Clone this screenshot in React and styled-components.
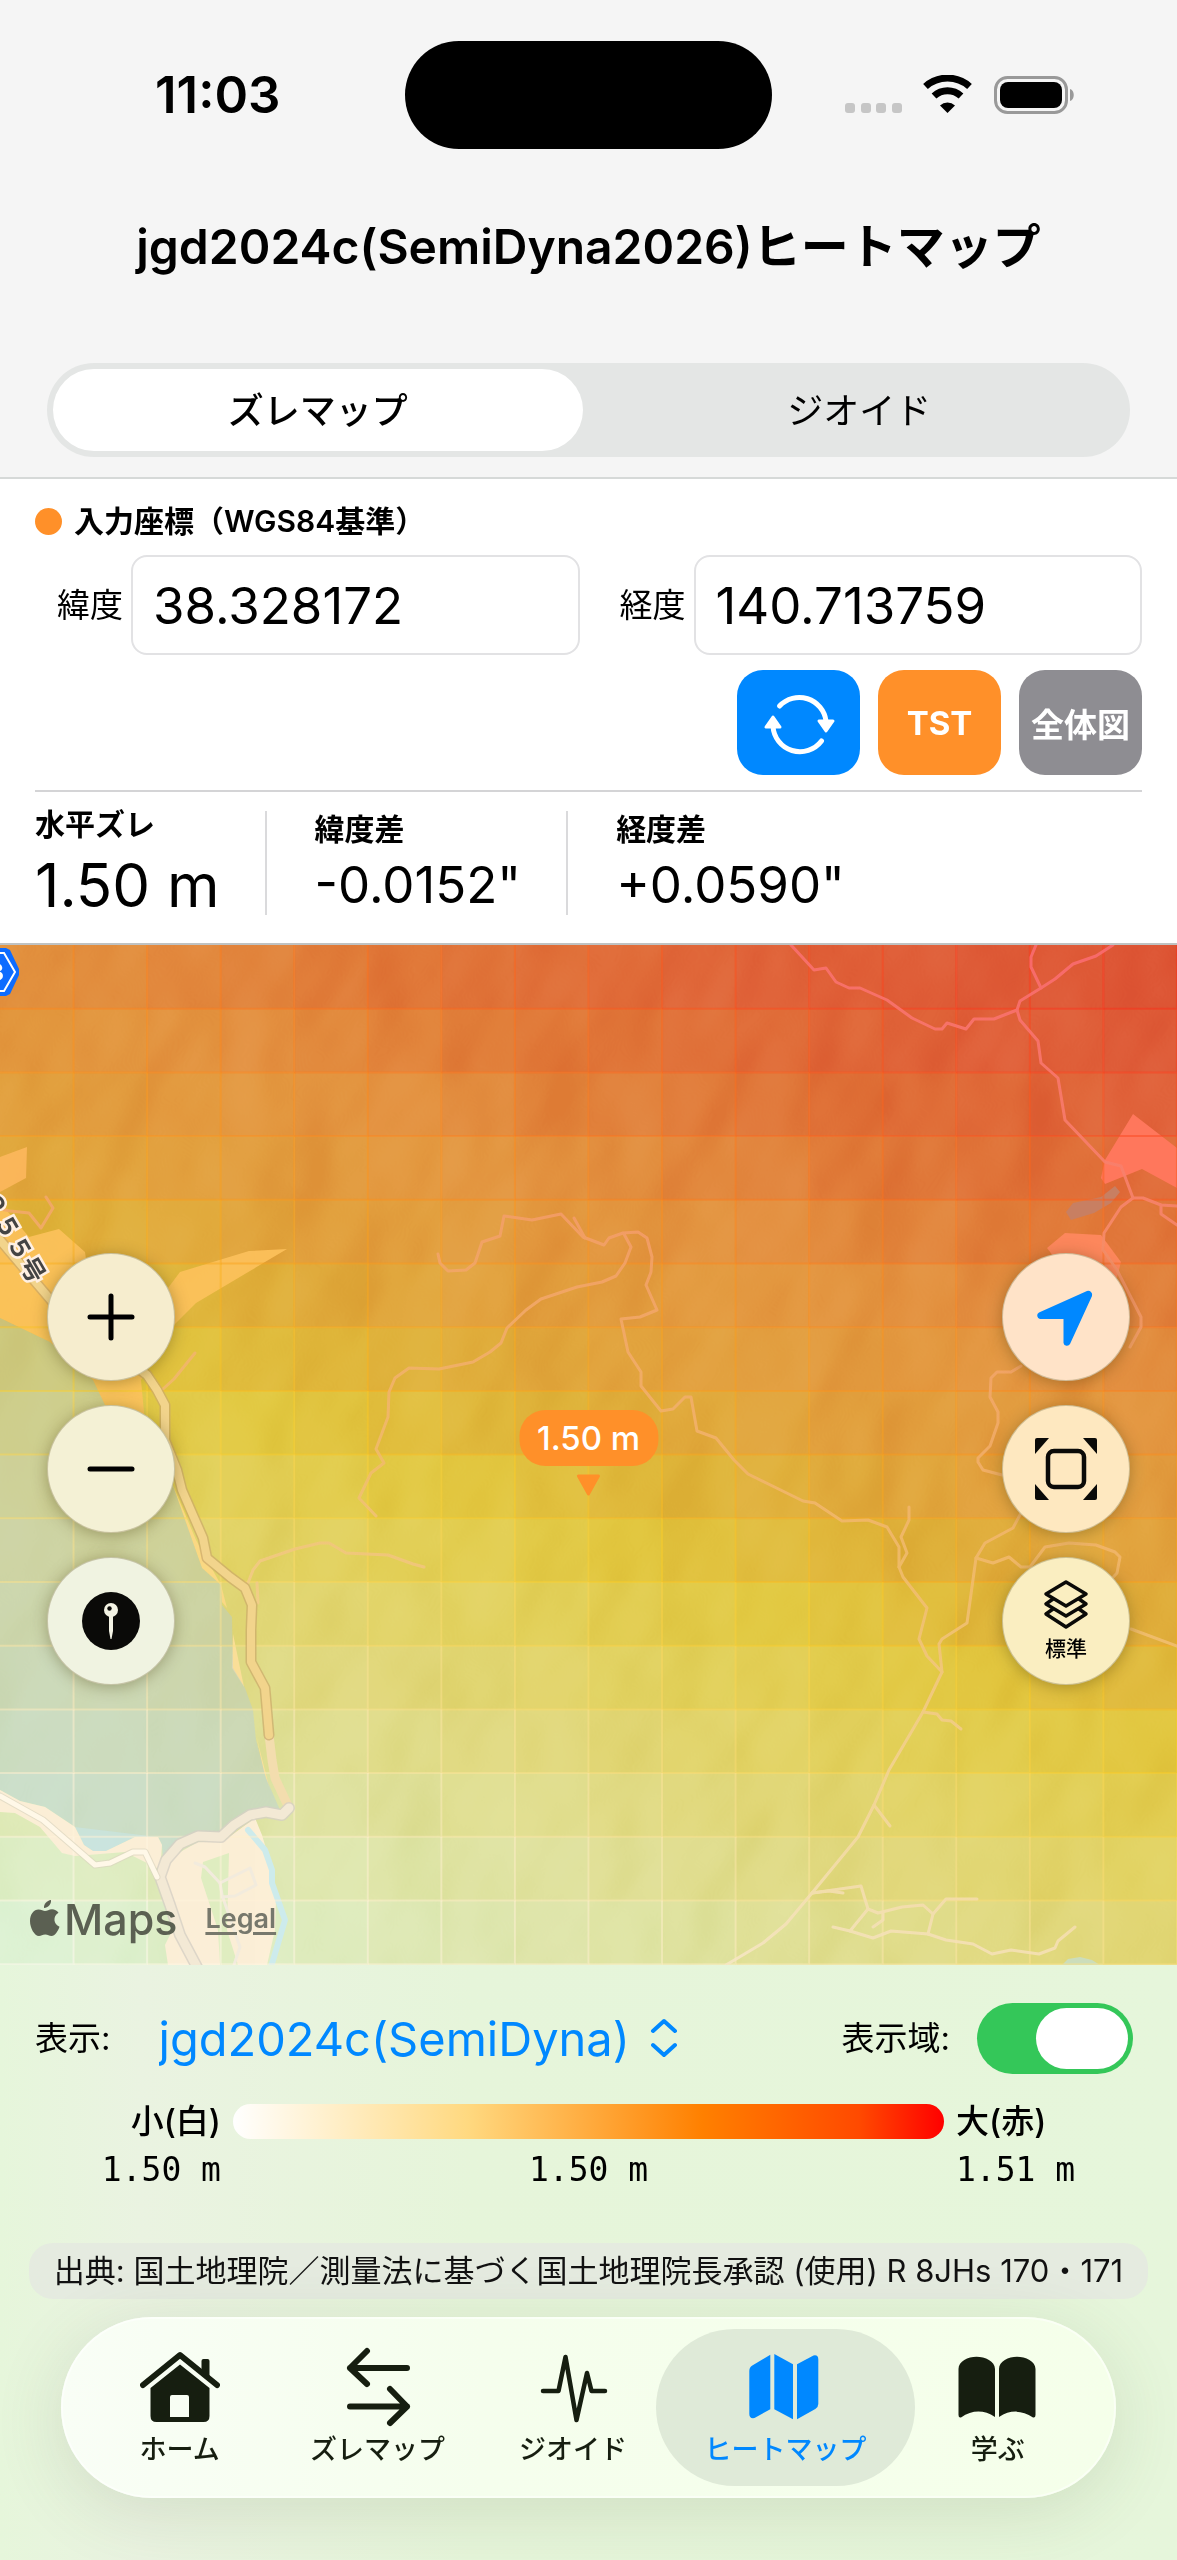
import { useState } from 'react'
import styled, { createGlobalStyle } from 'styled-components'

const GlobalStyle = createGlobalStyle`
    * {
        box-sizing: border-box;
    }

    body {
        margin: 0;
        background: #E6F5DA;
        color: #000;
        font-family: Inter, 'Noto Sans CJK JP', sans-serif;
    }

    button, input, select {
        font-family: inherit;
        color: inherit;
    }
`

const Page = styled.div`
    display: flex;
    flex-direction: column;
    min-height: 100vh;
`

/* ---------- header ---------- */

const Header = styled.header`
    background: #F5F5F5;
    border-bottom: 2px solid #D6D9D8;
    padding: 41px 47px 20px;
`

const StatusBar = styled.div`
    display: grid;
    grid-template-columns: 1fr 367px 1fr;
    align-items: center;
`

const Clock = styled.div`
    padding-left: 108px;
    font-size: 51px;
    line-height: 60px;
    font-weight: 600;
`

const Island = styled.div`
    height: 108px;
    border-radius: 54px;
    background: #000;
`

const StatusIcons = styled.div`
    display: flex;
    justify-content: flex-end;
    padding-right: 54px;
`

const Title = styled.h1`
    margin: 60px 0 78px;
    font-size: 48px;
    line-height: 76px;
    font-weight: 600;
    text-align: center;
    white-space: nowrap;
`

const Segments = styled.div`
    display: grid;
    grid-template-columns: 1fr 1fr;
    gap: 12px;
    height: 94px;
    padding: 6px;
    border-radius: 47px;
    background: #E4E6E5;
`

const Segment = styled.button`
    padding: 0 0 4px;
    border: none;
    border-radius: 41px;
    background: ${({ $active }) => ($active ? '#FFF' : 'transparent')};
    font-size: 36px;
    font-weight: ${({ $active }) => ($active ? 500 : 400)};
    cursor: pointer;
`

/* ---------- coordinate panel ---------- */

const Panel = styled.section`
    background: #FFF;
    border-bottom: 2px solid #BFC2C2;
    padding: 24px 35px 19px;
`

const PanelHeading = styled.h2`
    display: flex;
    align-items: center;
    gap: 12px;
    margin: 0 0 16px;
    font-size: 30px;
    line-height: 36px;
    font-weight: 600;
`

const Dot = styled.span`
    width: 27px;
    height: 27px;
    border-radius: 50%;
    background: #FF9029;
`

const Fields = styled.div`
    display: grid;
    grid-template-columns: repeat(2, minmax(0, 1fr));
    gap: 40px;
    padding-left: 22px;
`

const Field = styled.div`
    display: flex;
    align-items: center;
    gap: 8px;
`

const FieldLabel = styled.label`
    flex: none;
    font-size: 33px;
    line-height: 40px;
`

const FieldInput = styled.input`
    flex: 1;
    min-width: 0;
    height: 100px;
    padding: 0 20px;
    border: 2px solid #E2E2E4;
    border-radius: 16px;
    background: #FFF;
    font-size: 51px;
`

const Actions = styled.div`
    display: flex;
    justify-content: flex-end;
    gap: 18px;
    padding: 15px 0;
    border-bottom: 2px solid #D4D4D6;
`

const Action = styled.button`
    display: flex;
    align-items: center;
    justify-content: center;
    width: 123px;
    height: 105px;
    padding: 0;
    border: none;
    border-radius: 26px;
    background: ${({ $color }) => $color};
    color: #FFF;
    font-size: 33px;
    font-weight: 700;
    white-space: nowrap;
    cursor: pointer;
`

const Stats = styled.dl`
    display: flex;
    align-items: center;
    margin: 10px 0 0;
`

const Stat = styled.div`
    position: relative;
    padding-right: 47px;
    margin-right: 48px;

    &:not(:last-child)::after {
        content: '';
        position: absolute;
        right: 0;
        top: calc(50% - 52px);
        width: 2px;
        height: 104px;
        background: #DADADC;
    }
`

const StatLabel = styled.dt`
    font-size: 30px;
    line-height: 44px;
    font-weight: 600;
`

const StatValue = styled.dd`
    margin: 0;
    font-size: ${({ $large }) => ($large ? '60px' : '51px')};
    line-height: ${({ $large }) => ($large ? '78px' : '68px')};
    white-space: nowrap;
`

/* ---------- map ---------- */

const MapArea = styled.main`
    position: relative;
    height: 1020px;
    overflow: hidden;
    padding: 308px 47px 0;
    display: flex;
    justify-content: space-between;
    align-items: flex-start;
`

const MapCanvas = styled.svg`
    position: absolute;
    inset: 0;
    width: 100%;
    height: 100%;
    font-family: Inter, 'Noto Sans CJK JP', sans-serif;
`

const Controls = styled.div`
    position: relative;
    display: flex;
    flex-direction: column;
    gap: 24px;
`

const RoundButton = styled.button`
    display: flex;
    flex-direction: column;
    align-items: center;
    justify-content: center;
    gap: 4px;
    width: 128px;
    height: 128px;
    padding: 0;
    border: 1px solid rgba(120, 110, 60, 0.35);
    border-radius: 50%;
    background: ${({ $tint }) => $tint};
    box-shadow: 0 2px 16px rgba(60, 50, 0, 0.35);
    font-size: 21px;
    line-height: 28px;
    font-weight: 500;
    cursor: pointer;
`

const Marker = styled.div`
    position: absolute;
    left: 50%;
    top: 465px;
    transform: translateX(-50%);
    display: flex;
    flex-direction: column;
    align-items: center;
    gap: 8px;
`

const MarkerLabel = styled.div`
    height: 56px;
    padding: 0 18px;
    border-radius: 26px;
    background: #FF9029;
    color: #FFF;
    font-size: 33px;
    line-height: 56px;
    font-weight: 500;
    white-space: nowrap;
`

const Attribution = styled.div`
    position: absolute;
    left: 30px;
    bottom: 18px;
    display: flex;
    align-items: center;
    color: #5B6052;
`

const MapsName = styled.span`
    margin: 0 28px 0 4px;
    font-size: 43px;
    line-height: 56px;
    font-weight: 500;
`

const Legal = styled.a`
    color: #77786C;
    font-size: 27px;
    line-height: 56px;
    font-weight: 600;
    text-underline-offset: 4px;
    text-decoration-thickness: 3px;
`

/* ---------- legend ---------- */

const Footer = styled.section`
    flex: 1;
    background: linear-gradient(90deg, #E6F6DB 0%, #EAF3E1 12%, #E6F5DA 40%, #E6F6DB 100%);
    padding: 37px 29px 62px;
`

const DisplayRow = styled.div`
    display: flex;
    align-items: center;
    height: 72px;
    padding: 0 15px 0 6px;
`

const RowLabel = styled.label`
    font-size: 33px;
    line-height: 40px;
    white-space: nowrap;
`

const ModelSelect = styled.select`
    appearance: none;
    margin: 0 18px 0 48px;
    padding: 0;
    border: none;
    background: transparent;
    color: #0088FF;
    font-size: 47px;
    cursor: pointer;
`

const Spacer = styled.div`
    flex: 1;
`

const Toggle = styled.input`
    appearance: none;
    width: 156px;
    height: 71px;
    margin: 0 0 0 27px;
    padding: 5px;
    border-radius: 36px;
    background: ${({ checked }) => (checked ? '#34C759' : '#C7CCC4')};
    cursor: pointer;

    &::before {
        content: '';
        display: block;
        width: 92px;
        height: 61px;
        margin-left: ${({ checked }) => (checked ? 'auto' : '0')};
        border-radius: 31px;
        background: #FFF;
    }
`

const Legend = styled.div`
    display: grid;
    grid-template-columns: 186px 1fr 186px;
    column-gap: 12px;
    align-items: center;
    margin-top: 23px;
    padding: 0 6px;
`

const LegendEnd = styled.span`
    font-size: 33px;
    line-height: 48px;
    font-weight: 500;
    text-align: ${({ $align }) => $align};
`

const LegendBar = styled.div`
    height: 35px;
    border-radius: 18px;
    background: linear-gradient(90deg, #FFF 0%, #FFD980 33%, #FF8000 66%, #FF4A00 88%, #FF0000 100%);
`

const LegendValue = styled.span`
    font-family: 'DejaVu Sans Mono', monospace;
    font-size: 33px;
    line-height: 50px;
    text-align: ${({ $align }) => $align};
`

const Source = styled.p`
    margin: 48px 0 18px;
    border-radius: 24px;
    background: #E5EBE0;
    color: #111;
    font-size: 31px;
    line-height: 56px;
    text-align: center;
    white-space: nowrap;
`

/* ---------- tab bar ---------- */

const TabBar = styled.nav`
    display: grid;
    grid-template-columns: 171fr 224fr 166fr 258fr 166fr;
    height: 181px;
    margin: 0 32px;
    padding: 12px 35px 12px 33px;
    border-radius: 91px;
    background: linear-gradient(90deg, #F9FEF6, #F5FEED 40%, #F5FFEA);
    box-shadow: 0 14px 70px rgba(70, 90, 50, 0.14), inset 0 0 0 2px rgba(255, 255, 255, 0.5);
`

const Tab = styled.a`
    display: flex;
    flex-direction: column;
    align-items: center;
    padding-top: 18px;
    border-radius: 79px;
    background: ${({ $active }) => ($active ? '#DFEAD8' : 'transparent')};
    color: ${({ $active }) => ($active ? '#0088FF' : '#161E10')};
    font-size: 27px;
    line-height: 46px;
    font-weight: 500;
    text-decoration: none;
    white-space: nowrap;
`

/* ---------- map data ---------- */

const CELL_W = 73.56
const CELL_H = 63.7

// [distance down the slope, fill, edge]
const RAMP = [
    [-7, [220, 82, 51], [250, 40, 25]],
    [-4.5, [224, 97, 57], [252, 70, 30]],
    [-2.7, [224, 114, 56], [252, 100, 30]],
    [-1.6, [225, 127, 58], [252, 115, 30]],
    [0, [227, 147, 64], [252, 135, 30]],
    [2.4, [226, 162, 62], [250, 160, 30]],
    [4, [223, 179, 58], [250, 175, 30]],
    [5.6, [226, 200, 64], [250, 205, 40]],
    [7.4, [226, 210, 96], [252, 215, 90]],
    [9, [225, 216, 124], [252, 225, 140]],
    [11.4, [223, 227, 162], [255, 238, 200]],
    [15, [222, 242, 212], [255, 250, 240]],
]

function rampColor(s, index) {
    if (s <= RAMP[0][0]) return `rgb(${RAMP[0][index].join(',')})`
    for (let i = 1; i < RAMP.length; i++) {
        const [end] = RAMP[i]
        if (s <= end) {
            const [start] = RAMP[i - 1]
            const t = (s - start) / (end - start)
            const mix = RAMP[i][index].map((v, k) => Math.round(RAMP[i - 1][index][k] * (1 - t) + v * t))
            return `rgb(${mix.join(',')})`
        }
    }
    return `rgb(${RAMP[RAMP.length - 1][index].join(',')})`
}

const CELLS = Array.from({ length: 256 }, (_, i) => {
    const col = i % 16
    const row = Math.floor(i / 16)
    const s = row - col * 0.43
    return { id: i, x: col * CELL_W, y: row * CELL_H, fill: rampColor(s, 1), edge: rampColor(s, 2) }
})

const TRAILS = [
    '0,1209 10,1211 29,1213 41,1228 53,1208 46,1197',
    '438,1254 440,1263 448,1271 466,1270 475,1263 482,1242 500,1236 504,1216 532,1220 561,1214 583,1237 604,1245 609,1238 623,1233 638,1232 647,1238 652,1257 651,1272 646,1285 657,1310 640,1317 621,1319 628,1352 641,1372 641,1386 661,1411 673,1409 685,1397 691,1397 697,1431 716,1438 734,1460 748,1474 803,1501 815,1503 842,1521 868,1520 887,1527 899,1547 899,1567 903,1577 927,1608 919,1639 927,1656 942,1672 923,1712 889,1770 874,1805 858,1837 812,1893 786,1924 763,1943 726,1965',
    '574,1218 585,1238',
    '624,1234 631,1247 625,1263 616,1276 602,1282 577,1287 541,1299 526,1310 507,1328 501,1343 490,1352 473,1362 439,1369 409,1368 395,1378 389,1392 388,1417 376,1449 384,1463 371,1473 359,1498 376,1516',
    '248,1583 253,1570 260,1561 295,1549 320,1543 329,1543 346,1553 388,1555 413,1564 424,1567',
    '257,1583 258,1603',
    '163,1389 174,1379 195,1353',
    '791,945 814,970 826,968 836,982 849,988 860,988 887,1000 912,1018 935,1029 942,1029 947,1023 966,1029 974,1019 994,1019 1017,1010 1020,1001 1041,988 1055,979 1073,964 1096,956 1113,945',
    '1036,945 1031,957 1031,967 1041,988',
    '1017,1010 1020,1020 1038,1041 1041,1063 1058,1078 1065,1120 1105,1162 1121,1166 1133,1198 1121,1207 1104,1233 1103,1250 1117,1270 1141,1317 1141,1327 1130,1347',
    '1133,1198 1143,1198 1161,1205 1177,1206',
    '1161,1205 1161,1214 1177,1225',
    '1021,1366 1011,1372 997,1372 991,1378 990,1397 998,1412 998,1423 990,1446 978,1458 978,1462 983,1470 1002,1475',
    '1021,1513 1013,1528 985,1543 976,1558 967,1623 942,1639 939,1644 942,1672',
    '976,1558 993,1563 1009,1557 1021,1567 1030,1567 1045,1547 1069,1543 1096,1545 1115,1552 1120,1557 1117,1573 1106,1585',
    '909,1507 909,1520 901,1537 907,1553 899,1567',
    '923,1712 937,1714 942,1720 951,1721 961,1729',
    '874,1805 890,1826',
    '812,1893 861,1886 868,1909 878,1913 902,1907 923,1905 933,1914 946,1899 977,1899',
    '812,1893 829,1891 843,1893',
    '868,1909 850,1931',
    '883,1913 883,1920 873,1927',
    '933,1914 928,1934',
    '833,1927 850,1931 873,1938 891,1931 928,1934 946,1940 973,1944 992,1954 1011,1950 1039,1954 1055,1948 1058,1941 1075,1927',
    '1131,1629 1177,1646',
]

const MAIN_ROAD = '0,1240 38,1285 55,1305 147,1375 157,1390 165,1405 165,1440 177,1470 182,1490 203,1538 207,1558 230,1577 245,1588 252,1605 251,1630 251,1662 265,1688 269,1735'
const LINK_ROAD = '269,1735 272,1760 275,1778 289,1808'
const SOUTH_ROAD = '289,1808 282,1815 266,1812 250,1815 234,1825 221,1837 198,1836 180,1844 166,1860 160,1877 170,1905 180,1935 197,1967'
const WEST_ROAD = '0,1796 43,1820 95,1865 110,1863 133,1852 145,1852 157,1877'
const LAKE = '0,1318 50,1342 93,1380 105,1405 130,1420 172,1483 202,1568 221,1585 222,1605 232,1617 233,1668 245,1688 253,1710 256,1740 266,1778 280,1810 250,1820 232,1833 220,1839 197,1836 180,1842 165,1856 163,1860 162,1845 158,1837 135,1837 106,1851 93,1851 84,1845 75,1827 45,1807 20,1801 0,1790'

function HeatMap() {
    return (
        <MapCanvas viewBox="0 945 1177 1020" preserveAspectRatio="xMidYMid slice" aria-hidden="true">
            <defs>
                <filter id="relief" x="0" y="0" width="100%" height="100%" colorInterpolationFilters="sRGB">
                    <feTurbulence type="fractalNoise" baseFrequency="0.008 0.005" numOctaves="3" seed="8" />
                    <feGaussianBlur stdDeviation="3" />
                    <feDiffuseLighting surfaceScale="30" lightingColor="#FFF">
                        <feDistantLight azimuth="315" elevation="30" />
                    </feDiffuseLighting>
                </filter>
                <linearGradient id="trail" gradientUnits="userSpaceOnUse" x1="960" y1="945" x2="760" y2="1965">
                    <stop offset="0" stopColor="#FA6C70" />
                    <stop offset="0.2" stopColor="#F8826C" />
                    <stop offset="0.35" stopColor="#F3A168" />
                    <stop offset="0.6" stopColor="#F1BC6C" />
                    <stop offset="0.8" stopColor="#F3D494" />
                    <stop offset="1" stopColor="#F6E6C4" />
                </linearGradient>
            </defs>
            <g transform="translate(0 945)">
                {CELLS.map((cell) => (
                    <rect key={cell.id} x={cell.x} y={cell.y} width="74" height="64.2" fill={cell.fill} />
                ))}
            </g>
            <g transform="rotate(35 588 1455)" opacity="0.17" style={{ mixBlendMode: 'soft-light' }}>
                <rect x="-250" y="550" width="1700" height="1800" filter="url(#relief)" />
            </g>

            <g fill="#FFB95F" opacity="0.85">
                <polygon points="0,1157 27,1147 26,1178 0,1192" />
                <polygon points="0,1203 8,1212 29,1237 59,1229 85,1252 88,1273 168,1288 180,1272 249,1251 287,1249 196,1303 172,1327 141,1380 145,1423 130,1425 105,1405 93,1380 50,1342 0,1318" fill="#FFC35E" />
                <polygon points="172,1483 196,1540 221,1585 202,1568" fill="#FFD987" />
                <polygon points="221,1585 227,1608 222,1602" fill="#FFD987" />
                <polygon points="233,1634 244,1687 232,1668" fill="#FFE09C" />
                <polygon points="256,1735 270,1790 264,1772" fill="#FFE09C" />
            </g>
            <polygon points="1133,1114 1177,1148 1177,1188 1142,1169 1105,1184 1101,1178 1105,1160" fill="#FF775C" />
            <polygon points="1047,1248 1065,1233 1101,1235 1121,1262 1115,1285 1060,1265" fill="#FD875C" />
            <polygon points="1066,1212 1073,1203 1101,1197 1115,1186 1120,1192 1111,1203 1094,1213 1071,1220" fill="#C87F62" />
            <polygon points={LAKE} fill="#A8CBEC" opacity="0.34" />
            <polygon points="75,1827 84,1845 93,1851 106,1851 135,1837 158,1837" fill="#C8E8EC" opacity="0.5" />
            <polygon points="1062,1965 1068,1959 1080,1957 1092,1960 1100,1965" fill="#CCDDBB" />

            <g fill="#FDEFD8" opacity="0.95">
                <polygon points="0,1790 20,1801 45,1807 75,1827 84,1845 93,1851 106,1851 135,1837 158,1837 162,1845 160,1870 145,1862 125,1852 75,1856 62,1853 40,1827 15,1813 0,1812" />
                <polygon points="160,1877 166,1860 198,1842 225,1840 255,1818 262,1835 268,1855 272,1885 276,1900 275,1930 267,1965 168,1965 165,1945 175,1925" />
            </g>
            <polygon points="203,1862 229,1853 227,1930 238,1965 220,1965 218,1930 201,1878" fill="#DFEDC0" />

            <g fill="none" strokeLinejoin="round" strokeLinecap="round">
                <polyline points="248,1830 265,1850 272,1870 272,1883 285,1920 271,1967" stroke="#CDEBEC" strokeWidth="6" />
                <g stroke="#F2EBDD" strokeWidth="3">
                    <polyline points="195,1863 205,1867 220,1883 222,1895 240,1947 234,1965" />
                    <polyline points="220,1883 250,1868 256,1885 235,1896 222,1897" />
                </g>
            </g>

            <g>
                {CELLS.map((cell) => (
                    <path
                        key={cell.id}
                        d={`M${cell.x} ${cell.y + 945 + CELL_H}h${CELL_W}v${-CELL_H}`}
                        fill="none"
                        stroke={cell.edge}
                        strokeWidth="2"
                        opacity="0.5"
                    />
                ))}
            </g>

            <g fill="none" strokeLinejoin="round" strokeLinecap="round">
                <g stroke="url(#trail)" strokeWidth="3" opacity="0.9">
                    {TRAILS.map((points) => <polyline key={points} points={points} />)}
                </g>
                <polyline points={LINK_ROAD} stroke="#F3DDAE" strokeWidth="9" />
                <polyline points={MAIN_ROAD} stroke="#CBA86A" strokeWidth="11" opacity="0.7" />
                <polyline points={MAIN_ROAD} stroke="#F2D48C" strokeWidth="8" />
                <polyline points={SOUTH_ROAD} stroke="#D6D0C4" strokeWidth="12" opacity="0.8" />
                <polyline points={SOUTH_ROAD} stroke="#F3E9D5" strokeWidth="9" />
                <polyline points={WEST_ROAD} stroke="#DCD6C0" strokeWidth="7" opacity="0.7" />
                <polyline points={WEST_ROAD} stroke="#FFF8E8" strokeWidth="5" />
            </g>

            <path d="M-14 948h20l4 2 9 19v6l-9 19-4 2h-20z" fill="#0D6CFF" />
            <path d="M-12 953h16l11 19-11 19h-16" fill="none" stroke="#FFF" strokeWidth="2" />
            <text x="4" y="981" textAnchor="end" fontSize="25" fontWeight="800" fill="#FFF">3</text>
            <text
                x="31"
                y="1285"
                transform="rotate(60 31 1285)"
                textAnchor="end"
                fontSize="25"
                fontWeight="700"
                fill="#444"
                stroke="#FFF0E2"
                strokeWidth="5"
                paintOrder="stroke"
            >
                ２５５号
            </text>
        </MapCanvas>
    )
}

/* ---------- icons ---------- */

function PhoneStatus() {
    return (
        <svg width="232" height="40" viewBox="0 0 232 40" aria-hidden="true">
            <g fill="#C6C6C6">
                <rect x="1" y="28" width="10" height="10" rx="3" />
                <rect x="17" y="28" width="10" height="10" rx="3" />
                <rect x="32" y="28" width="10" height="10" rx="3" />
                <rect x="48" y="28" width="10" height="10" rx="3" />
            </g>
            <g fill="none" stroke="#000" strokeWidth="7">
                <path d="M81.500 11.500a33 33 0 0 1 44 0" />
                <path d="M90 21a20 20 0 0 1 27 0" />
            </g>
            <path d="M103.500 38l-7.500-7.500a11 11 0 0 1 15 0z" />
            <rect x="151.500" y="2.500" width="71" height="35" rx="12" fill="none" stroke="#999" strokeWidth="3" />
            <rect x="156" y="7" width="62" height="26" rx="8" />
            <path d="M226 14c5 1 5 11 0 12z" fill="#999" />
        </svg>
    )
}

function RefreshIcon() {
    return (
        <svg width="80" height="80" viewBox="0 0 80 80" fill="none" stroke="#FFF" strokeWidth="5" strokeLinecap="round" aria-hidden="true">
            <path d="M20.500 23A27 27 0 0 1 67 38" />
            <path d="M62.500 58A27 27 0 0 1 14 43" />
            <path d="M60 38h14l-7 10z" fill="#FFF" strokeWidth="3" strokeLinejoin="round" />
            <path d="M7 44h14l-7-10z" fill="#FFF" strokeWidth="3" strokeLinejoin="round" />
        </svg>
    )
}

function PlusIcon() {
    return (
        <svg width="52" height="52" viewBox="0 0 52 52" stroke="#000" strokeWidth="5" strokeLinecap="round" aria-hidden="true">
            <path d="M5 26h42M26 5v42" />
        </svg>
    )
}

function MinusIcon() {
    return (
        <svg width="52" height="52" viewBox="0 0 52 52" stroke="#000" strokeWidth="5" strokeLinecap="round" aria-hidden="true">
            <path d="M5 26h42" />
        </svg>
    )
}

function PinIcon() {
    return (
        <svg width="58" height="58" viewBox="0 0 58 58" aria-hidden="true">
            <circle cx="29" cy="29" r="29" fill="#0A0A08" />
            <circle cx="29" cy="18" r="7" fill="#F3F3E4" />
            <circle cx="27.500" cy="16.500" r="2.200" fill="#0A0A08" />
            <path d="M27 24h4v15l-1.500 8h-1L27 39z" fill="#F3F3E4" />
        </svg>
    )
}

function LocateIcon() {
    return (
        <svg width="64" height="64" viewBox="0 0 64 64" aria-hidden="true">
            <path d="M53 6L5 27.500a3.500 3.500 0 0 0 1 6.500h23.500v24a3.500 3.500 0 0 0 6.500 1L58 11a4 4 0 0 0-5-5z" fill="#0088FF" />
        </svg>
    )
}

function FrameIcon() {
    return (
        <svg width="64" height="64" viewBox="0 0 64 64" fill="#0A0A08" aria-hidden="true">
            <rect x="14" y="14" width="36" height="36" rx="6" fill="none" stroke="#0A0A08" strokeWidth="4.500" />
            <path d="M1 3q0-2 2-2h12L1 17z" />
            <path d="M63 3q0-2-2-2H49l14 16z" />
            <path d="M1 61q0 2 2 2h12L1 47z" />
            <path d="M63 61q0 2-2 2H49l14-16z" />
        </svg>
    )
}

function LayersIcon() {
    return (
        <svg width="48" height="52" viewBox="0 0 48 52" fill="none" stroke="#0A0A08" strokeWidth="3.500" strokeLinejoin="round" aria-hidden="true">
            <path d="M24 3L44 15 24 27 4 15z" />
            <path d="M11 20l-7 5 20 12 20-12-7-5" />
            <path d="M11 30l-7 5 20 13 20-13-7-5" />
        </svg>
    )
}

function AppleIcon() {
    return (
        <svg width="30" height="38" viewBox="0 0 30 38" fill="#5B6052" aria-hidden="true">
            <path d="M21 0c.5 4-3 8-7 8-.5-4 3-7.500 7-8z" />
            <path d="M15 11c2 0 4-1.800 7-1.800 2.500 0 5 1.300 6.500 3.500-6 3.500-5 11.500 1 14C28 31 25 36 21.500 36c-2.500 0-3.500-1.500-6.300-1.500-2.700 0-4 1.500-6.200 1.500C4.500 36 0 28 0 21c0-7 4-11.500 8.500-11.500 2.800 0 5 1.500 6.500 1.500z" />
        </svg>
    )
}

function ChevronsIcon() {
    return (
        <svg width="30" height="42" viewBox="0 0 30 42" fill="none" stroke="#0088FF" strokeWidth="4" strokeLinecap="round" strokeLinejoin="round" aria-hidden="true">
            <path d="M4 14L15 4l11 10M4 28l11 10 11-10" />
        </svg>
    )
}

function HomeIcon() {
    return (
        <svg width="80" height="80" viewBox="0 0 80 80" fill="currentColor" aria-hidden="true">
            <path d="M3 38L40 8l37 30" fill="none" stroke="currentColor" strokeWidth="6" strokeLinecap="round" strokeLinejoin="round" />
            <path d="M61.500 24V14q0-2 2-2h4q2 0 2 2v18z" />
            <path fillRule="evenodd" d="M40 17.500L69.500 41v28q0 6-6 6h-47q-6 0-6-6V41zM32 48q-2 0-2 2v20h19V50q0-2-2-2z" />
        </svg>
    )
}

function ArrowsIcon() {
    return (
        <svg width="80" height="80" viewBox="0 0 80 80" fill="none" stroke="currentColor" strokeWidth="6" strokeLinecap="round" strokeLinejoin="round" aria-hidden="true">
            <path d="M69 21H12M29 4L12 21l17 16" />
            <path d="M12 59.500h57M52 42l17 17.500L52 76" />
        </svg>
    )
}

function WaveIcon() {
    return (
        <svg width="80" height="80" viewBox="0 0 80 80" fill="none" stroke="currentColor" strokeWidth="4.500" strokeLinecap="round" strokeLinejoin="round" aria-hidden="true">
            <path d="M10 44h15.500L32.500 10l11 63L54 26l4.500 18H72" />
        </svg>
    )
}

function MapIcon() {
    return (
        <svg width="80" height="80" viewBox="0 0 80 80" fill="currentColor" aria-hidden="true">
            <path d="M25.300 7.700v54.600L9.500 71q-5.200 1-5.200-4V24q0-4 3-5.500z" />
            <path d="M29.300 7L48 17.300v55L29.300 62.300z" />
            <path d="M52 17.300L68.500 8.500q4.800-1 4.800 4V57q0 3-3 5L52 72.300z" />
        </svg>
    )
}

function BookIcon() {
    return (
        <svg width="80" height="80" viewBox="0 0 80 80" fill="currentColor" aria-hidden="true">
            <path d="M.5 22C.5 14 10 9.700 18.500 9.700S37 14 37 22v48q-17-11-34 .5Q.5 71 .5 68z" />
            <path d="M41 22c0-8 9.500-12.300 18-12.300S77.500 14 77.500 22v46q0 3-2.500 2.500Q58 59 41 70z" />
        </svg>
    )
}

const TABS = [
    { label: 'ホーム', Icon: HomeIcon },
    { label: 'ズレマップ', Icon: ArrowsIcon },
    { label: 'ジオイド', Icon: WaveIcon },
    { label: 'ヒートマップ', Icon: MapIcon, active: true },
    { label: '学ぶ', Icon: BookIcon },
]

const STATS = [
    { label: '水平ズレ', value: '1.50 m', large: true },
    { label: '緯度差', value: '-0.0152"' },
    { label: '経度差', value: '+0.0590"' },
]

function App() {
    const [mode, setMode] = useState('ズレマップ')
    const [showArea, setShowArea] = useState(true)

    return (
        <Page>
            <GlobalStyle />
            <Header>
                <StatusBar>
                    <Clock>11:03</Clock>
                    <Island />
                    <StatusIcons><PhoneStatus /></StatusIcons>
                </StatusBar>
                <Title>jgd2024c(SemiDyna2026)ヒートマップ</Title>
                <Segments>
                    {['ズレマップ', 'ジオイド'].map((name) => (
                        <Segment key={name} type="button" $active={mode === name} onClick={() => setMode(name)}>
                            {name}
                        </Segment>
                    ))}
                </Segments>
            </Header>

            <Panel>
                <PanelHeading><Dot />入力座標（WGS84基準）</PanelHeading>
                <Fields>
                    <Field>
                        <FieldLabel htmlFor="lat">緯度</FieldLabel>
                        <FieldInput id="lat" inputMode="decimal" defaultValue="38.328172" />
                    </Field>
                    <Field>
                        <FieldLabel htmlFor="lon">経度</FieldLabel>
                        <FieldInput id="lon" inputMode="decimal" defaultValue="140.713759" />
                    </Field>
                </Fields>
                <Actions>
                    <Action type="button" $color="#0088FF" aria-label="更新"><RefreshIcon /></Action>
                    <Action type="button" $color="#FF9029">TST</Action>
                    <Action type="button" $color="#8E8D92">全体図</Action>
                </Actions>
                <Stats>
                    {STATS.map((stat) => (
                        <Stat key={stat.label}>
                            <StatLabel>{stat.label}</StatLabel>
                            <StatValue $large={stat.large}>{stat.value}</StatValue>
                        </Stat>
                    ))}
                </Stats>
            </Panel>

            <MapArea>
                <HeatMap />
                <Controls>
                    <RoundButton type="button" $tint="#F6EDCE" aria-label="拡大"><PlusIcon /></RoundButton>
                    <RoundButton type="button" $tint="#F4F1D5" aria-label="縮小"><MinusIcon /></RoundButton>
                    <RoundButton type="button" $tint="#F0F3E1" aria-label="ピン"><PinIcon /></RoundButton>
                </Controls>
                <Marker>
                    <MarkerLabel>1.50 m</MarkerLabel>
                    <svg width="26" height="24" viewBox="0 0 26 24" aria-hidden="true">
                        <path d="M3 2h20L13 20z" fill="#FF9029" stroke="#FF9029" strokeWidth="3" strokeLinejoin="round" />
                    </svg>
                </Marker>
                <Controls>
                    <RoundButton type="button" $tint="#FFE3C8" aria-label="現在地"><LocateIcon /></RoundButton>
                    <RoundButton type="button" $tint="#FEE8C0" aria-label="全体表示"><FrameIcon /></RoundButton>
                    <RoundButton type="button" $tint="#FAEEC1"><LayersIcon />標準</RoundButton>
                </Controls>
                <Attribution>
                    <AppleIcon />
                    <MapsName>Maps</MapsName>
                    <Legal href="#legal">Legal</Legal>
                </Attribution>
            </MapArea>

            <Footer>
                <DisplayRow>
                    <RowLabel htmlFor="model">表示:</RowLabel>
                    <ModelSelect id="model">
                        <option>jgd2024c(SemiDyna)</option>
                    </ModelSelect>
                    <ChevronsIcon />
                    <Spacer />
                    <RowLabel htmlFor="area">表示域:</RowLabel>
                    <Toggle
                        id="area"
                        type="checkbox"
                        role="switch"
                        checked={showArea}
                        onChange={(e) => setShowArea(e.target.checked)}
                    />
                </DisplayRow>
                <Legend>
                    <LegendEnd $align="right">小(白)</LegendEnd>
                    <LegendBar />
                    <LegendEnd $align="left">大(赤)</LegendEnd>
                    <LegendValue $align="right">1.50 m</LegendValue>
                    <LegendValue $align="center">1.50 m</LegendValue>
                    <LegendValue $align="left">1.51 m</LegendValue>
                </Legend>
                <Source>出典: 国土地理院／測量法に基づく国土地理院長承認 (使用) R 8JHs 170・171</Source>
                <TabBar>
                    {TABS.map(({ label, Icon, active }) => (
                        <Tab key={label} href="#" $active={active} aria-current={active ? 'page' : undefined}>
                            <Icon />
                            {label}
                        </Tab>
                    ))}
                </TabBar>
            </Footer>
        </Page>
    )
}

export default App
